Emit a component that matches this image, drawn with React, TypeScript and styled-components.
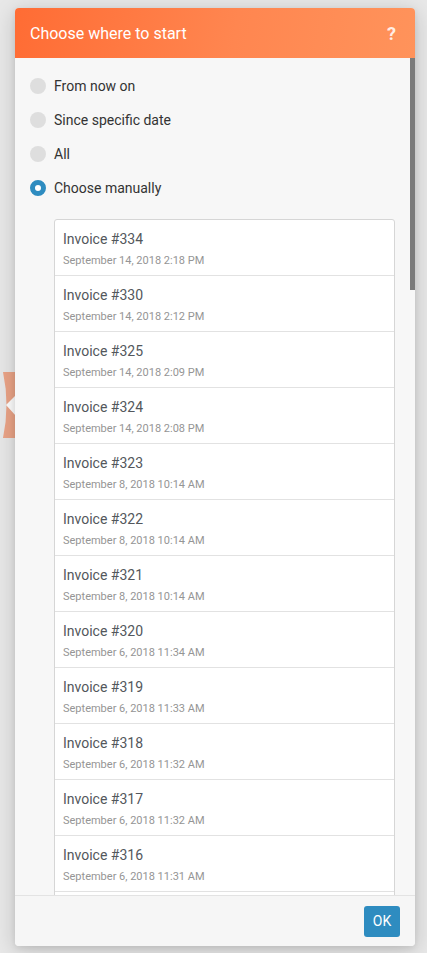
import React, { FC, useState } from 'react';
import styled, { createGlobalStyle } from 'styled-components';

const GlobalStyle = createGlobalStyle`
  html, body {
    margin: 0;
    padding: 0;
    background: #e8e8e8;
    font-family: Roboto, 'Liberation Sans', Arial, sans-serif;
  }
`;

type Invoice = { id: number; date: string };

const invoices: Invoice[] = [
  { id: 334, date: 'September 14, 2018 2:18 PM' },
  { id: 330, date: 'September 14, 2018 2:12 PM' },
  { id: 325, date: 'September 14, 2018 2:09 PM' },
  { id: 324, date: 'September 14, 2018 2:08 PM' },
  { id: 323, date: 'September 8, 2018 10:14 AM' },
  { id: 322, date: 'September 8, 2018 10:14 AM' },
  { id: 321, date: 'September 8, 2018 10:14 AM' },
  { id: 320, date: 'September 6, 2018 11:34 AM' },
  { id: 319, date: 'September 6, 2018 11:33 AM' },
  { id: 318, date: 'September 6, 2018 11:32 AM' },
  { id: 317, date: 'September 6, 2018 11:32 AM' },
  { id: 316, date: 'September 6, 2018 11:31 AM' },
  { id: 315, date: 'September 6, 2018 11:30 AM' },
];

const options = ['From now on', 'Since specific date', 'All', 'Choose manually'];

const Page = styled.div`
  position: relative;
  height: 953px;
  box-sizing: border-box;
  padding: 8px 12px 7px 15px;
  overflow: hidden;
`;

const BehindNode = styled.svg`
  position: absolute;
  left: 0;
  top: 370px;
`;

const Dialog = styled.div`
  position: relative;
  height: 938px;
  display: flex;
  flex-direction: column;
  background: #f7f7f7;
  border-radius: 4px;
  overflow: hidden;
  box-shadow: 0 4px 22px rgba(0, 0, 0, 0.18), 0 2px 6px rgba(0, 0, 0, 0.08);
`;

const Header = styled.div`
  flex: 0 0 50px;
  display: flex;
  align-items: center;
  justify-content: space-between;
  padding: 0 19px 0 15px;
  background: linear-gradient(100deg, #ff6c34 0%, #ff8650 55%, #ff935b 100%);
  color: #fff;
`;

const Title = styled.span`
  font-size: 16px;
  font-weight: 400;
`;

const Help = styled.span`
  font-size: 18px;
  font-weight: 700;
  color: rgba(255, 255, 255, 0.85);
`;

const BodyWrap = styled.div`
  position: relative;
  flex: 1;
  min-height: 0;
`;

const Body = styled.div`
  height: 100%;
  box-sizing: border-box;
  overflow: hidden;
  padding: 11px 20px 0 15px;
`;

const ScrollThumb = styled.div`
  position: absolute;
  top: 0;
  right: 0;
  width: 5px;
  height: 232px;
  background: #7b7b7b;
`;

const RadioRow = styled.label`
  display: flex;
  align-items: center;
  gap: 8px;
  height: 34px;
  font-size: 14px;
  color: #333;
  cursor: pointer;
`;

const RadioDot = styled.span<{ checked: boolean }>`
  width: 16px;
  height: 16px;
  border-radius: 50%;
  box-sizing: border-box;
  background: ${(p) => (p.checked ? '#fff' : '#dedede')};
  border: ${(p) => (p.checked ? '5px solid #2e8cc0' : 'none')};
`;

const List = styled.div`
  margin: 14px 0 0 24px;
  background: #fff;
  border: 1px solid #d6d6d6;
  border-radius: 3px;
`;

const Item = styled.div`
  height: 56px;
  box-sizing: border-box;
  padding: 9px 8px 0 8px;
  border-bottom: 1px solid #e2e2e2;
`;

const ItemTitle = styled.div`
  font-size: 14px;
  line-height: 20px;
  color: #53575c;
`;

const ItemDate = styled.div`
  margin-top: 5px;
  font-size: 11px;
  line-height: 14px;
  color: #959595;
`;

const Footer = styled.div`
  flex: 0 0 51px;
  box-sizing: border-box;
  display: flex;
  align-items: center;
  justify-content: flex-end;
  padding: 0 15px;
  border-top: 1px solid #e3e3e3;
  background: #f6f6f6;
`;

const OkButton = styled.button`
  width: 36px;
  height: 31px;
  border: none;
  border-radius: 3px;
  background: #2e8cc0;
  color: #fff;
  font-family: Roboto, 'Liberation Sans', Arial, sans-serif;
  font-size: 14px;
  padding: 0;
`;

const App: FC = () => {
  const [selected, setSelected] = useState(3);

  return (
    <>
      <GlobalStyle />
      <Page>
        <BehindNode width="16" height="70" viewBox="0 0 16 70">
          <path d="M3 2 Q10 35 3 68 L16 68 L16 2 Z" fill="#eba487" />
          <path d="M6 35 L16 25 L16 46 Z" fill="#ffffff" />
        </BehindNode>
        <Dialog>
          <Header>
            <Title>Choose where to start</Title>
            <Help>?</Help>
          </Header>
          <BodyWrap>
            <Body>
              {options.map((label, i) => (
                <RadioRow key={label} onClick={() => setSelected(i)}>
                  <RadioDot checked={selected === i} />
                  {label}
                </RadioRow>
              ))}
              <List>
                {invoices.map((inv) => (
                  <Item key={inv.id}>
                    <ItemTitle>Invoice #{inv.id}</ItemTitle>
                    <ItemDate>{inv.date}</ItemDate>
                  </Item>
                ))}
              </List>
            </Body>
            <ScrollThumb />
          </BodyWrap>
          <Footer>
            <OkButton>OK</OkButton>
          </Footer>
        </Dialog>
      </Page>
    </>
  );
};

export default App;
